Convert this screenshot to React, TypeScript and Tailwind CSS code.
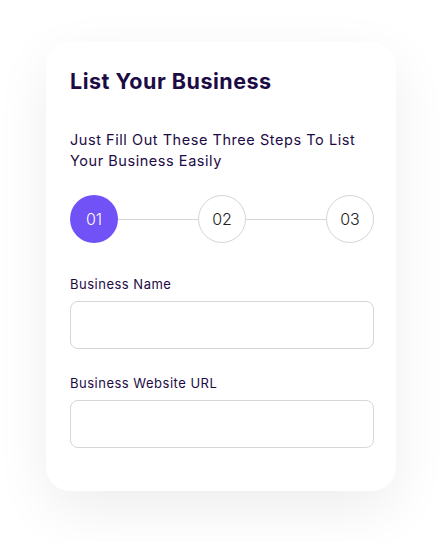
import React from "react";

export default function App() {
  const font = { fontFamily: "Inter, 'Noto Sans', sans-serif" };
  return (
    <div className="w-[443px] h-[542px] bg-white pt-[42px] pl-[46px]" style={font}>
      <div className="w-[350px] h-[449px] bg-white rounded-[24px] shadow-[0_18px_55px_rgba(0,0,0,0.07)] px-[24px] pt-[24px]">
        <h1 className="text-[21.5px] leading-[30px] font-bold text-[#1c0b45] tracking-[0.5px]">List Your Business</h1>
        <p className="mt-[33px] text-[14.5px] leading-[21px] text-[#1c0b45] w-[300px] tracking-[0.55px]">
          Just Fill Out These Three Steps To List Your Business Easily
        </p>
        <div className="mt-[24px] flex items-center w-[304px]">
          <div className="w-[48px] h-[48px] rounded-full bg-[#7152f7] text-white flex items-center justify-center text-[16px] font-light shrink-0">01</div>
          <div className="flex-1 h-px bg-[#d6d6d6]" />
          <div className="w-[48px] h-[48px] rounded-full border border-[#d6d6d6] text-[#222] flex items-center justify-center text-[16px] font-light shrink-0">02</div>
          <div className="flex-1 h-px bg-[#d6d6d6]" />
          <div className="w-[48px] h-[48px] rounded-full border border-[#d6d6d6] text-[#222] flex items-center justify-center text-[16px] font-light shrink-0">03</div>
        </div>
        <label className="block mt-[32px] text-[13px] leading-[18px] text-[#1c0b45] tracking-[0.5px]">Business Name</label>
        <div className="mt-[8px] w-[304px] h-[48px] rounded-[8px] border border-[#d6d6d6]" />
        <label className="block mt-[25px] text-[13px] leading-[18px] text-[#1c0b45] tracking-[0.5px]">Business Website URL</label>
        <div className="mt-[8px] w-[304px] h-[48px] rounded-[8px] border border-[#d6d6d6]" />
      </div>
    </div>
  );
}
